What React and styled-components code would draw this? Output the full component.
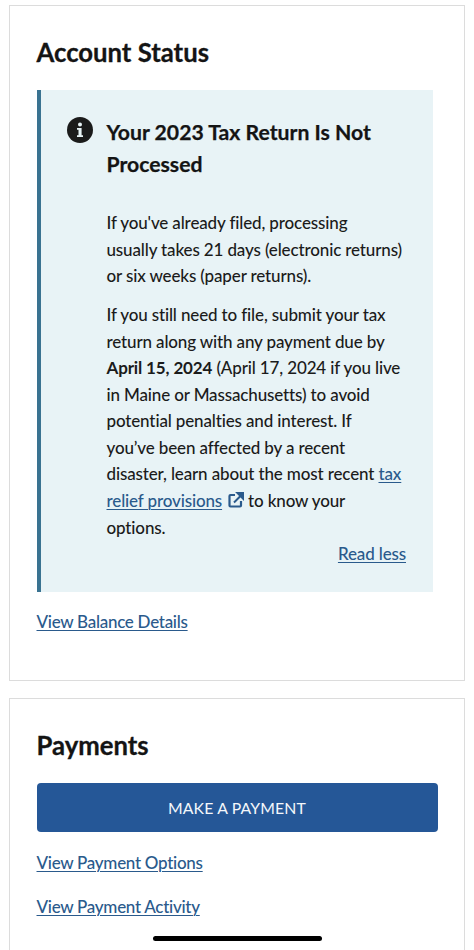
import React from "react";
import styled, { createGlobalStyle } from "styled-components";

const Global = createGlobalStyle`
  html, body { margin: 0; padding: 0; background: #ffffff; }
  body { font-family: "Lato", "Liberation Sans", sans-serif; color: #1b1b1b; }
`;

const Page = styled.div`
  position: relative;
  width: 474px;
  height: 950px;
  overflow: hidden;
  padding: 5px 9px 0;
  box-sizing: border-box;
  display: flex;
  flex-direction: column;
  gap: 17px;
`;

const Card = styled.section`
  border: 1px solid #dcdcdc;
  border-bottom-width: ${(p) => (p.$open ? "0" : "1px")};
  box-sizing: border-box;
  height: ${(p) => p.$height}px;
  padding: 31px 26.5px 0;
  flex: none;
`;

const CardTitle = styled.h2`
  margin: 0;
  font-size: 25.7px;
  line-height: 31px;
  font-weight: 700;
  color: #141414;
  -webkit-text-stroke: 0.3px #141414;
`;

const Alert = styled.div`
  margin-top: 22px;
  width: 396.5px;
  height: 502px;
  box-sizing: border-box;
  background: #e8f3f6;
  border-left: 4px solid #3a7391;
  padding: 27px 0 0 26px;
  display: grid;
  grid-template-columns: 40px 1fr;
  align-content: start;
`;

const InfoIcon = styled.svg`
  width: 26px;
  height: 26px;
  display: block;
`;

const AlertBody = styled.div`
  min-width: 0;
  padding-right: 27px;
`;

const AlertTitle = styled.h3`
  margin: 0 0 30px;
  font-size: 21.2px;
  line-height: 31.5px;
  font-weight: 700;
  color: #141414;
  -webkit-text-stroke: 0.25px #141414;
`;

const Para = styled.p`
  margin: 0 0 12.5px;
  font-size: 17px;
  letter-spacing: -0.14px;
  line-height: 26.55px;
  font-weight: 500;
  color: #1b1b1b;
  white-space: nowrap;
`;

const TextLink = styled.a`
  color: #2a5a8c;
  text-decoration: underline;
  text-underline-offset: 1.5px;
  text-decoration-thickness: 1px;
`;

const ExternalIcon = styled.svg`
  width: 16px;
  height: 16px;
  margin: 0 4px 0 6px;
  vertical-align: -1px;
`;

const ReadLess = styled.div`
  margin: -13px 0 0 0;
  text-align: right;
  font-size: 17px;
  letter-spacing: -0.14px;
  font-weight: 500;
  line-height: 26.55px;
`;

const LinkLine = styled.div`
  font-size: 17px;
  letter-spacing: -0.28px;
  font-weight: 500;
  line-height: 26px;
  margin-top: ${(p) => p.$top}px;
`;

const PayButton = styled.button`
  display: block;
  width: 401px;
  height: 49px;
  margin-top: 22px;
  border: 0;
  border-radius: 4px;
  background: #255797;
  color: #f4f7fb;
  font-family: inherit;
  font-size: 15.8px;
  font-weight: 400;
  letter-spacing: 0.15px;
`;

const HomeBar = styled.div`
  position: absolute;
  left: 153px;
  top: 936px;
  width: 169px;
  height: 5px;
  border-radius: 3px;
  background: #000000;
`;

export default function App() {
  return (
    <>
      <Global />
      <Page>
        <Card $height={676}>
          <CardTitle>Account Status</CardTitle>
          <Alert>
            <InfoIcon viewBox="0 0 26 26" aria-hidden="true">
              <circle cx="13" cy="13" r="13" fill="#1b1b1b" />
              <circle cx="13" cy="7.6" r="2" fill="#e8f3f6" />
              <path d="M10 11h4.6v7.2H16V20h-6v-1.8h1.5v-5.4H10z" fill="#e8f3f6" />
            </InfoIcon>
            <AlertBody>
              <AlertTitle>Your 2023 Tax Return Is Not<br />Processed</AlertTitle>
              <Para>
                If you've already filed, processing<br />
                usually takes 21 days (electronic returns)<br />
                or six weeks (paper returns).
              </Para>
              <Para>
                If you still need to file, submit your tax<br />
                return along with any payment due by<br />
                <strong>April 15, 2024</strong> (April 17, 2024 if you live<br />
                in Maine or Massachusetts) to avoid<br />
                potential penalties and interest. If<br />
                you’ve been affected by a recent<br />
                disaster, learn about the most recent <TextLink href="#">tax</TextLink><br />
                <TextLink href="#">relief provisions</TextLink>
                <ExternalIcon viewBox="0 0 16 16" aria-hidden="true">
                  <path d="M7 3H2.5A1 1 0 0 0 1.5 4v9.5a1 1 0 0 0 1 1H12a1 1 0 0 0 1-1V9" fill="none" stroke="#2a5a8c" strokeWidth="2.2" />
                  <path d="M6 10.5L13.5 3M9.5 1h6v6z" fill="#2a5a8c" stroke="#2a5a8c" strokeWidth="2" strokeLinejoin="miter" />
                </ExternalIcon>
                to know your<br />
                options.
              </Para>
              <ReadLess>
                <TextLink href="#">Read less</TextLink>
              </ReadLess>
            </AlertBody>
          </Alert>
          <LinkLine $top={17}>
            <TextLink href="#">View Balance Details</TextLink>
          </LinkLine>
        </Card>
        <Card $height={252} $open>
          <CardTitle>Payments</CardTitle>
          <PayButton>MAKE A PAYMENT</PayButton>
          <LinkLine $top={18}>
            <TextLink href="#">View Payment Options</TextLink>
          </LinkLine>
          <LinkLine $top={18}>
            <TextLink href="#">View Payment Activity</TextLink>
          </LinkLine>
        </Card>
        <HomeBar />
      </Page>
    </>
  );
}
